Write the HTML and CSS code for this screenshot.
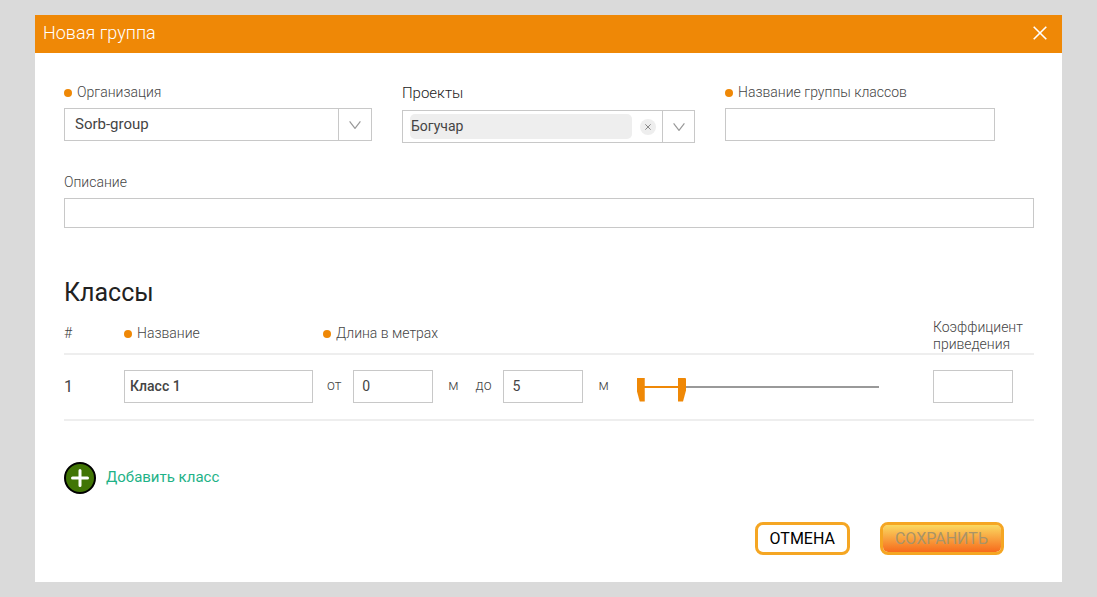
FILE: index.html
```html
<!DOCTYPE html>
<html lang="ru">
<head>
<meta charset="utf-8">
<meta name="viewport" content="width=device-width, initial-scale=1">
<title>Новая группа</title>
<link rel="stylesheet" href="styles.css">
</head>
<body>
<div class="modal" role="dialog" aria-labelledby="modal-title">
  <header class="modal-header">
    <h1 class="modal-title" id="modal-title">Новая группа</h1>
    <button class="close" type="button" aria-label="Закрыть">
      <svg width="14" height="14" viewBox="0 0 14 14"><path d="M.7.7l12.6 12.6M13.3.7L.7 13.3" fill="none" stroke="currentColor" stroke-width="1.6"/></svg>
    </button>
  </header>
  <form class="modal-body">
    <div class="fields">
      <div class="field">
        <label class="label required" for="org">Организация</label>
        <div class="combo">
          <select class="combo-select" id="org"><option>Sorb-group</option></select>
          <span class="combo-arrow"><svg width="12" height="8" viewBox="0 0 12 8"><path d="M.6.4L6 7.4 11.4.4" fill="none" stroke="currentColor" stroke-width="1.2"/></svg></span>
        </div>
      </div>
      <div class="field">
        <span class="label label-large" id="projects-label">Проекты</span>
        <div class="combo combo-tags" role="group" aria-labelledby="projects-label">
          <span class="tag-area"><span class="tag">Богучар</span></span>
          <button class="clear" type="button" aria-label="Очистить"><svg width="6" height="6" viewBox="0 0 6 6"><path d="M.3.3l5.4 5.4M5.7.3L.3 5.7" fill="none" stroke="currentColor"/></svg></button>
          <button class="combo-arrow combo-toggle" type="button" aria-label="Выбрать проекты"><svg width="12" height="8" viewBox="0 0 12 8"><path d="M.6.4L6 7.4 11.4.4" fill="none" stroke="currentColor" stroke-width="1.2"/></svg></button>
        </div>
      </div>
      <div class="field">
        <label class="label required" for="group-name">Название группы классов</label>
        <input class="input" id="group-name" type="text">
      </div>
    </div>
    <div class="field description">
      <label class="label" for="description">Описание</label>
      <input class="input input-wide" id="description" type="text">
    </div>

    <h2 class="section-title">Классы</h2>
    <table class="classes">
      <thead>
        <tr>
          <th class="col-number">#</th>
          <th class="col-name" id="name-head"><span class="required">Название</span></th>
          <th class="col-length"><span class="required">Длина в метрах</span></th>
          <th class="col-factor" id="factor-head">Коэффициент приведения</th>
        </tr>
      </thead>
      <tbody>
        <tr>
          <td class="number">1</td>
          <td><input class="input class-name" type="text" value="Класс 1" aria-labelledby="name-head"></td>
          <td>
            <div class="length">
              <label class="unit" for="from">от</label>
              <input class="input short" id="from" type="text" value="0">
              <span class="unit unit-after">м</span>
              <label class="unit" for="to">до</label>
              <input class="input short" id="to" type="text" value="5">
              <span class="unit unit-after">м</span>
              <div class="slider">
                <input class="range range-min" type="range" min="0" max="34" value="0" aria-label="Минимальная длина">
                <input class="range range-max" type="range" min="0" max="34" value="5" aria-label="Максимальная длина">
              </div>
            </div>
          </td>
          <td><input class="input factor" type="text" aria-labelledby="factor-head"></td>
        </tr>
      </tbody>
    </table>

    <button class="add" type="button">
      <svg width="32" height="32" viewBox="0 0 32 32"><circle cx="16" cy="16" r="15" fill="#417505" stroke="#000" stroke-width="2"/><path d="M16 8.5v15M8.500 16h15" stroke="#fff" stroke-width="3" stroke-linecap="round"/></svg>
      <span>Добавить класс</span>
    </button>

    <div class="actions">
      <button class="button" type="button">ОТМЕНА</button>
      <button class="button button-primary" type="submit" disabled>СОХРАНИТЬ</button>
    </div>
  </form>
</div>
</body>
</html>
```
FILE: styles.css
```css
* {
  box-sizing: border-box;
}

body {
  margin: 0;
  padding: 15px 35px;
  background: #dadada;
  color: #444;
  font: 300 14px/18px Roboto, "Liberation Sans", sans-serif;
}

button,
input,
select {
  margin: 0;
  color: inherit;
  font: inherit;
}

button {
  padding: 0;
  border: 0;
  background: none;
  cursor: pointer;
}

svg {
  display: block;
}

.modal {
  background: #fff;
}

.modal-header {
  display: flex;
  align-items: center;
  justify-content: space-between;
  height: 38px;
  padding: 0 15px 2px 8px;
  background: #ef8806;
  color: #fff;
}

.modal-title {
  margin: 0;
  font-size: 18px;
  font-weight: 300;
  line-height: 24px;
}

.modal-body {
  padding: 30px 28px 27px 29px;
}

.fields {
  display: grid;
  grid-template-columns: 308fr 293fr 270fr;
  gap: 30px;
  align-items: start;
  padding-right: 39px;
}

.field {
  display: flex;
  flex-direction: column;
  gap: 7px;
}

.description {
  margin-top: 30px;
}

.label-large {
  color: #222;
  font-size: 15px;
  line-height: 20px;
}

.required::before {
  content: "";
  display: inline-block;
  width: 8px;
  height: 8px;
  margin-right: 5px;
  border-radius: 50%;
  background: #ef8806;
}

.input {
  width: 100%;
  height: 33px;
  padding: 0 8px 2px;
  border: 1px solid #c8c8c8;
  border-radius: 0;
  background: #fff;
  font-weight: 400;
}

.input-wide {
  height: 30px;
}

.combo {
  display: grid;
  grid-template-columns: 1fr auto 33px;
  height: 33px;
  border: 1px solid #c8c8c8;
  font-weight: 400;
}

.combo-tags {
  grid-template-columns: 1fr auto 32px;
}

.combo-select {
  grid-area: 1 / 1 / 2 / 4;
  padding: 0 42px 2px 10px;
  border: 0;
  appearance: none;
  background: none;
  font-size: 15px;
}

.combo-arrow {
  grid-area: 1 / 3;
  display: grid;
  place-items: center;
  border-left: 1px solid #c8c8c8;
  color: #999;
  pointer-events: none;
}

.combo-toggle {
  pointer-events: auto;
}

.tag-area {
  display: grid;
  padding: 3px 8px 3px 7px;
}

.tag {
  padding: 3px 1px;
  border-radius: 5px;
  background: #eee;
}

.clear {
  display: grid;
  place-items: center;
  align-self: center;
  width: 16px;
  height: 16px;
  margin-right: 6px;
  border-radius: 50%;
  background: #eee;
  color: #888;
}

.section-title {
  margin: 50px 0 11px;
  color: #222;
  font-size: 25px;
  font-weight: 400;
  line-height: 30px;
}

.classes {
  width: 100%;
  border-collapse: separate;
  border-spacing: 0;
  table-layout: fixed;
}

.classes th,
.classes td {
  padding: 0;
  border-bottom: 2px solid #eee;
  text-align: left;
}

.classes th {
  padding-bottom: 6px;
  font-weight: 300;
  line-height: 17px;
}

.classes td {
  padding: 15px 0 16px;
}

.classes .col-number {
  width: 60px;
}

.classes .col-name {
  width: 199px;
}

.classes .col-factor {
  width: 101px;
  padding-bottom: 0;
}

.classes .number {
  font-size: 16px;
  font-weight: 400;
}

.class-name {
  display: block;
  width: 189px;
  padding: 0 5px 2px;
  font-weight: 500;
}

.length {
  display: flex;
  align-items: center;
  gap: 12px;
  padding: 0 54px 0 4px;
}

.unit {
  padding-bottom: 4px;
}

.unit-after {
  padding-left: 3px;
  padding-right: 5px;
}

.short {
  flex: none;
  width: 80px;
}

.slider {
  flex: 1;
  display: grid;
  min-width: 0;
  margin-left: 11px;
  padding-top: 6px;
  background: linear-gradient(#ef8806, #ef8806) 0 14px / 44px 2px no-repeat,
    linear-gradient(#999, #999) 0 14px / 100% 2px no-repeat;
}

.range {
  grid-area: 1 / 1;
  width: auto;
  min-width: 0;
  height: 24px;
  appearance: none;
  background: none;
  pointer-events: none;
}

.range-min {
  margin-right: 8px;
}

.range-max {
  margin-left: 8px;
}

.range::-webkit-slider-thumb {
  width: 8px;
  height: 24px;
  appearance: none;
  background: #ef8806;
  pointer-events: auto;
}

.range-min::-webkit-slider-thumb {
  clip-path: polygon(1px 0, 100% 0, 100% 100%, 3px 100%, 0 13px, 0 1px);
}

.range-max::-webkit-slider-thumb {
  clip-path: polygon(0 0, 7px 0, 100% 1px, 100% 13px, 5px 100%, 0 100%);
}

.factor {
  display: block;
  width: 80px;
}

.add {
  display: flex;
  align-items: center;
  gap: 10px;
  margin-top: 41px;
  color: #1eb287;
  font-size: 15px;
  font-weight: 400;
}

.add span {
  padding-bottom: 2px;
}

.actions {
  display: flex;
  justify-content: flex-end;
  gap: 30px;
  margin-top: 28px;
  padding-right: 30px;
}

.button {
  height: 33px;
  padding: 0 12px;
  border: 3px solid #f5a623;
  border-radius: 8px;
  background: #fff;
  color: #000;
  font-size: 16px;
  font-weight: 400;
}

.button-primary {
  padding-right: 13px;
  background: linear-gradient(#fad961, #f76b1c) padding-box;
  color: #a89468;
}
```
